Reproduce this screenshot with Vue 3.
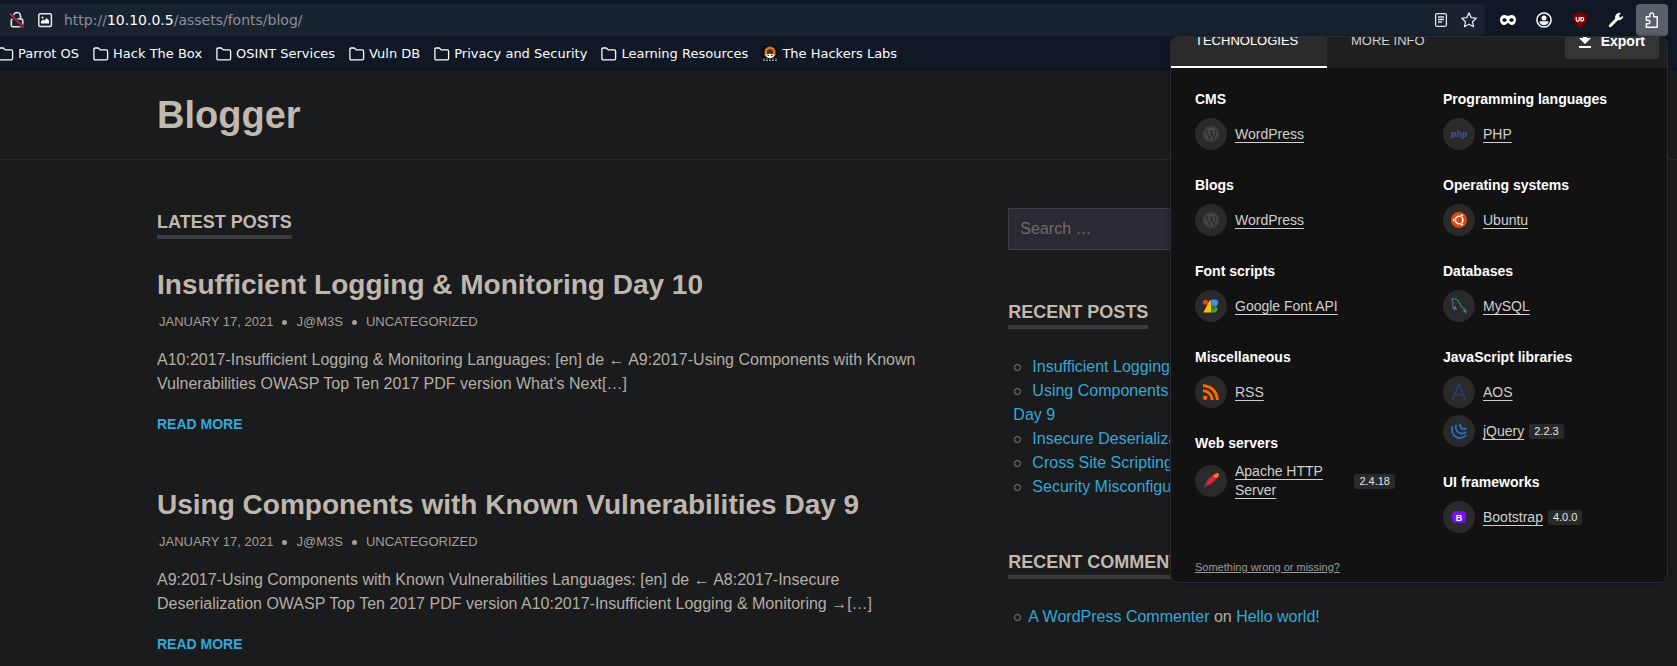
<script setup>
const bookmarks = [
  'Parrot OS', 'Hack The Box', 'OSINT Services', 'Vuln DB',
  'Privacy and Security', 'Learning Resources',
]

const posts = [
  {
    title: 'Insufficient Logging & Monitoring Day 10',
    excerpt: 'A10:2017-Insufficient Logging & Monitoring Languages: [en] de ← A9:2017-Using Components with Known Vulnerabilities OWASP Top Ten 2017 PDF version What’s Next[…]',
  },
  {
    title: 'Using Components with Known Vulnerabilities Day 9',
    excerpt: 'A9:2017-Using Components with Known Vulnerabilities Languages: [en] de ← A8:2017-Insecure Deserialization OWASP Top Ten 2017 PDF version A10:2017-Insufficient Logging & Monitoring →[…]',
  },
]

const recentPosts = [
  'Insufficient Logging & Monitoring Day 10',
  'Using Components with Known Vulnerabilities Day 9',
  'Insecure Deserialization Day 8',
  'Cross Site Scripting Day 7',
  'Security Misconfiguration Day 6',
]

const columns = [
  [
    { title: 'CMS', items: [{ name: 'WordPress', icon: 'wordpress' }] },
    { title: 'Blogs', items: [{ name: 'WordPress', icon: 'wordpress' }] },
    { title: 'Font scripts', items: [{ name: 'Google Font API', icon: 'gfonts' }] },
    { title: 'Miscellaneous', items: [{ name: 'RSS', icon: 'rss' }] },
    { title: 'Web servers', items: [{ name: 'Apache HTTP Server', icon: 'apache', version: '2.4.18' }] },
  ],
  [
    { title: 'Programming languages', items: [{ name: 'PHP', icon: 'php' }] },
    { title: 'Operating systems', items: [{ name: 'Ubuntu', icon: 'ubuntu' }] },
    { title: 'Databases', items: [{ name: 'MySQL', icon: 'mysql' }] },
    {
      title: 'JavaScript libraries',
      items: [{ name: 'AOS', icon: 'aos' }, { name: 'jQuery', icon: 'jquery', version: '2.2.3' }],
    },
    { title: 'UI frameworks', items: [{ name: 'Bootstrap', icon: 'bootstrap', version: '4.0.0' }] },
  ],
]
</script>

<template>
  <div class="browser">
    <header class="chrome">
      <div class="toolbar">
        <div class="urlbar">
          <button class="url-icon" aria-label="Connection not secure">
            <svg width="16" height="18" viewBox="0 0 16 18" fill="none">
              <path d="M4.5 8V5a3.5 3.5 0 0 1 7 0v3" stroke="#e6e8ee" stroke-width="1.6" />
              <rect x="2.3" y="8" width="11.4" height="7.7" rx="1.5" stroke="#e6e8ee" stroke-width="1.6" />
              <path d="M1 3l13 13" stroke="#192330" stroke-width="3.5" />
              <path d="M1 2.500l13.500 14" stroke="#e22850" stroke-width="1.5" />
            </svg>
          </button>
          <button class="url-icon" aria-label="Image permissions">
            <svg width="16" height="16" viewBox="0 0 16 16" fill="none">
              <rect x="1.800" y="1.800" width="12.600" height="12.600" rx="1.500" stroke="#e6e8ee" stroke-width="1.500" />
              <path d="M4 11.500V9.500l2-2 1.500 1L9.500 6 12 8.500v3z" fill="#fff" />
              <circle cx="5.500" cy="5.500" r="1" fill="#fff" />
            </svg>
          </button>
          <div class="address">http://<b>10.10.0.5</b>/assets/fonts/blog/</div>
          <button class="page-action" aria-label="Reader view">
            <svg width="16" height="16" viewBox="0 0 16 16" fill="none" stroke="#e0e3ea" stroke-width="1.300">
              <rect x="2.600" y="1.600" width="10.800" height="12.800" rx="1.500" />
              <path d="M5 5h6M5 7.500h6M5 10h4" />
            </svg>
          </button>
          <button class="page-action" aria-label="Bookmark this page">
            <svg width="16" height="16" viewBox="0 0 16 16" fill="none" stroke="#e0e3ea" stroke-width="1.300" stroke-linejoin="round">
              <path d="M8 .9l2.200 4.700 5 .6-3.700 3.500 1 5L8 12.200 3.500 14.700l1-5L.8 6.200l5-.6z" />
            </svg>
          </button>
        </div>
        <div class="tools">
          <button class="tool" aria-label="Private mask">
            <svg width="16" height="16" viewBox="0 0 16 16">
              <path fill="#fff" fill-rule="evenodd" d="M0 7.500C0 4.500 2 3 4.400 3 6.200 3 7 4 8 4s1.800-1 3.600-1C14 3 16 4.500 16 7.500c0 3.300-1.800 5.500-4.200 5.500C9.900 13 9.200 11 8 11s-1.900 2-3.800 2C1.800 13 0 10.800 0 7.500zM2.200 8c.6 1.400 1.400 1.900 2.300 1.900S6.200 9.400 6.800 8C6.200 6.700 5.400 6.200 4.500 6.200S2.800 6.700 2.200 8zm7 0c.6 1.400 1.400 1.900 2.300 1.900s1.700-.5 2.300-1.900c-.6-1.300-1.400-1.800-2.300-1.800S9.800 6.700 9.200 8z" />
            </svg>
          </button>
          <button class="tool" aria-label="Account">
            <svg width="16" height="16" viewBox="0 0 16 16">
              <circle cx="8" cy="8" r="7.100" fill="none" stroke="#fff" stroke-width="1.500" />
              <circle cx="8" cy="5.900" r="2.500" fill="#fff" />
              <path d="M3.400 9.300h9.200c0 2.200-1.800 3.900-4.600 3.900s-4.600-1.700-4.600-3.900z" fill="#fff" />
            </svg>
          </button>
          <button class="tool" aria-label="uBlock Origin">
            <svg width="16" height="16" viewBox="0 0 16 16">
              <path d="M8 .3C5.800 1.800 3.500 2.300 1 2.300c0 6 1 10 7 13.400 6-3.400 7-7.400 7-13.400-2.500 0-4.800-.5-7-2z" fill="#800000" />
              <path d="M4.200 5v2.800a1.500 1.500 0 0 0 3 0V5" fill="none" stroke="#fff" stroke-width="1.200" />
              <path d="M9 5.600h1a1.700 1.700 0 0 1 0 3.400H9z" fill="none" stroke="#fff" stroke-width="1.200" />
            </svg>
          </button>
          <button class="tool" aria-label="Developer tools">
            <svg width="16" height="16" viewBox="0 0 16 16">
              <path d="M2.300 13.700L9 7" stroke="#fff" stroke-width="3" stroke-linecap="round" />
              <path d="M12.800 1A4.500 4.500 0 0 0 7.200 6.300a4.400 4.400 0 0 0 8-2.500L12.500 5.600 10.800 4z" fill="#fff" />
            </svg>
          </button>
          <button class="tool active" aria-label="Extensions">
            <svg width="16" height="16" viewBox="0 0 16 16" fill="none" stroke="#fff" stroke-width="1.400" stroke-linejoin="round">
              <path d="M2.300 4.700h3.500V2.800a1.900 1.900 0 0 1 3.800 0v1.900h3.600v10.500H2.300v-3.400h1.900a1.700 1.700 0 0 0 0-3.600H2.300z" />
            </svg>
          </button>
        </div>
      </div>
      <nav class="bookmarks" aria-label="Bookmarks">
        <a v-for="name in bookmarks" :key="name" href="#" class="bookmark">
          <svg width="16" height="16" viewBox="0 0 16 16" fill="none" stroke="#fbfbfe" stroke-width="1.300">
            <path d="M.9 12.500V3.300Q.9 2 2.200 2h3l2.100 1.900h6Q14.600 3.900 14.600 5.200v7.300Q14.600 13.800 13.300 13.800H2.200Q.9 13.800 .9 12.500z" />
          </svg>
          <span>{{ name }}</span>
        </a>
        <a href="#" class="bookmark">
          <svg width="16" height="16" viewBox="0 0 16 16">
            <rect width="16" height="16" fill="#07101a" />
            <path d="M2.500 9.500V6a5.500 5.500 0 0 1 11 0v3.500l-2.500 1.500H5z" fill="#d9790c" />
            <path d="M5 9V6.200a3 3 0 0 1 6 0V9z" fill="#4a2a12" />
            <path d="M4 8.500q4-1.600 8 0v2L9.500 12h-3L4 10.500z" fill="#f2f2f2" />
            <path d="M5.500 9.500h1.500M9 9.500h1.500" stroke="#222" />
            <path d="M1 13h14M1 14.500h14" stroke="#8d989d" stroke-dasharray="2 1" />
          </svg>
          <span>The Hackers Labs</span>
        </a>
      </nav>
    </header>

    <div class="page">
      <header class="site-header">
        <h1>Blogger</h1>
      </header>
      <div class="content">
        <main>
          <h2 class="section-title">LATEST POSTS</h2>
          <div class="posts">
            <article v-for="post in posts" :key="post.title">
              <h3>{{ post.title }}</h3>
              <p class="meta">
                <span>JANUARY 17, 2021</span><i></i><span>J@M3S</span><i></i><span>UNCATEGORIZED</span>
              </p>
              <p class="excerpt">{{ post.excerpt }}</p>
              <a href="#" class="more">READ MORE</a>
            </article>
          </div>
        </main>
        <aside>
          <input class="search" type="search" placeholder="Search …" aria-label="Search" />
          <section class="widget">
            <h2 class="section-title">RECENT POSTS</h2>
            <ul>
              <li v-for="name in recentPosts" :key="name"><a class="entry" href="#">{{ name }}</a></li>
            </ul>
          </section>
          <section class="widget">
            <h2 class="section-title">RECENT COMMENTS</h2>
            <ul>
              <li><a href="#">A WordPress Commenter</a> on <a href="#">Hello world!</a></li>
            </ul>
          </section>
        </aside>
      </div>
    </div>

    <section class="popup" aria-label="Technologies">
      <div class="tabs">
        <button class="tab selected">TECHNOLOGIES</button>
        <button class="tab">MORE INFO</button>
        <button class="export">
          <svg width="12" height="14" viewBox="0 0 12 14" fill="#fff">
            <path d="M4 0h4v4h4L6 10 0 4h4zM0 12h12v2H0z" />
          </svg>
          <span>Export</span>
        </button>
      </div>
      <div class="tech">
        <div v-for="(groups, c) in columns" :key="c" class="tech-column">
          <section v-for="group in groups" :key="group.title" class="group">
            <h4>{{ group.title }}</h4>
            <div v-for="item in group.items" :key="item.name" class="item">
              <span class="badge">
                <svg width="16" height="16" viewBox="0 0 16 16" aria-hidden="true">
                  <g v-if="item.icon === 'wordpress'">
                    <circle cx="8" cy="8" r="7.500" fill="none" stroke="#4b4848" />
                    <circle cx="8" cy="8" r="6.600" fill="#4b4848" />
                    <path d="M2.200 5h3.300M6.900 5h3.600M3.500 5l3 8L8.300 8 7.500 5M8.300 5l2.600 8 1.900-6c.4-1.300-.6-1.700-.8-3" fill="none" stroke="#2a2929" stroke-width="1.100" />
                  </g>
                  <g v-else-if="item.icon === 'gfonts'">
                    <circle cx="2.500" cy="4.200" r="2.500" fill="#ea4335" />
                    <path d="M6.500 2.500H8.500V14.500H.3z" fill="#fbbc04" />
                    <path d="M8 1.500h1v13H8z" fill="#1a73e8" />
                    <path d="M9 1.500h3a3 3 0 0 1 0 6.500H9z" fill="#3c8bf5" />
                    <path d="M9 8h3a3.400 3.400 0 0 1 0 6.500H9z" fill="#34a853" />
                    <path d="M9 8h3a3.400 3.400 0 0 1 0 3.500H9z" fill="#188038" />
                  </g>
                  <g v-else-if="item.icon === 'rss'" fill="none" stroke="#ff6600" stroke-width="3">
                    <circle cx="2.200" cy="13.800" r="2.200" fill="#ff6600" stroke="none" />
                    <path d="M0 6.800A9.200 9.200 0 0 1 9.200 16M0 1.700A14.300 14.300 0 0 1 14.300 16" />
                  </g>
                  <g v-else-if="item.icon === 'apache'">
                    <path d="M1 15C1.500 9 8 1.500 14.500 0L16 1.200C15.500 5 8.500 12.500 3.500 12.800z" fill="#cb2138" />
                    <path d="M10 2.500L14.500 0 16 1.200 15 4 12.500 5z" fill="#f08a24" />
                    <path d="M1 15c.2-2.500 1.500-4.500 2.500-6l2 3-2 .8z" fill="#72307d" />
                    <path d="M3.500 12L14 2" stroke="#e9532a" stroke-width=".8" />
                  </g>
                  <text v-else-if="item.icon === 'php'" x="8" y="10.500" text-anchor="middle" class="php">php</text>
                  <g v-else-if="item.icon === 'ubuntu'">
                    <circle cx="8" cy="8" r="8" fill="#dd4814" />
                    <circle cx="8.200" cy="8" r="3.700" fill="none" stroke="#fff" stroke-width="1.600" />
                    <path d="M8.200 8L2.500 8M8.200 8l3-5M8.200 8l3 5" stroke="#dd4814" stroke-width=".8" />
                    <g fill="#fff" stroke="#dd4814" stroke-width=".5">
                      <circle cx="2.900" cy="8" r="1.400" /><circle cx="10.900" cy="3.400" r="1.400" /><circle cx="10.900" cy="12.600" r="1.400" />
                    </g>
                    <circle cx="8.200" cy="8" r="2.800" fill="#dd4814" />
                  </g>
                  <g v-else-if="item.icon === 'mysql'" fill="none" stroke="#4f7a90" stroke-width="1.100">
                    <path d="M.5 1C4 .3 7 2 8.500 5c1.200 2.800 2 4.500 4 5.500 1.200.6 2 1.400 2.500 2.300l-2.200-.2 2.600 2.600" />
                    <path d="M.5 1c.5 1.500 1.500 2 1.500 3.500-.5 2.500-.2 5 1 7l1.200-2.800 1.300 3.300" />
                  </g>
                  <path v-else-if="item.icon === 'aos'" d="M1.600 16L7.600 .8h.8L14.400 16M3.700 10.700h8.600" fill="none" stroke="#303a6a" stroke-width="1.800" />
                  <g v-else-if="item.icon === 'jquery'" fill="none" stroke="#2a6cc0" stroke-width="1.900">
                    <path d="M1.600 3C-.2 8.500 2.500 14.600 8.500 15c2.700.1 5-.9 6.800-2.800" />
                    <path d="M5 1.800c-1.100 4 1.200 8.300 5.300 8.700 1.900.1 3.500-.4 4.900-1.600" />
                    <path d="M9.200 .8c-.6 2.700.8 4.900 3.100 5.200 1.200.1 2.200-.2 3.200-.9" />
                  </g>
                  <g v-else>
                    <path d="M3 2.200h10q1.300 0 1.300 1.300c0 2 .2 3.500 1.500 4.500-1.300 1-1.500 2.500-1.500 4.500Q14.300 13.800 13 13.800H3q-1.300 0-1.300-1.300C1.700 10.500 1.500 9 .2 8c1.300-1 1.500-2.500 1.500-4.500Q1.700 2.200 3 2.200z" fill="#7613f7" />
                    <text x="8" y="11.500" text-anchor="middle" class="bs">B</text>
                  </g>
                </svg>
              </span>
              <a href="#" class="name">{{ item.name }}</a>
              <span v-if="item.version" class="version">{{ item.version }}</span>
            </div>
          </section>
        </div>
      </div>
      <a href="#" class="report">Something wrong or missing?</a>
    </section>
  </div>
</template>

<style>
body {
  margin: 0;
  background: #191b1c;
}
</style>

<style scoped>
.browser {
  position: relative;
  min-height: 100vh;
  font-family: "Liberation Sans", Arial, sans-serif;
  color: #b5aea5;
}
button {
  padding: 0;
  border: 0;
  background: none;
  font: inherit;
  color: inherit;
  display: flex;
  align-items: center;
  justify-content: center;
}
svg {
  display: block;
  flex: none;
}
h1, h2, h3, h4, p, ul {
  margin: 0;
  padding: 0;
}
a {
  color: #35a8da;
  text-decoration: none;
}

/* browser bars */
.chrome {
  background: #111825;
  border-bottom: 1px solid #0b0d13;
  font-family: "DejaVu Sans", sans-serif;
  color: #fbfbfe;
}
.toolbar {
  display: flex;
  align-items: center;
  gap: 7px;
  padding: 4px 9px 0 0;
}
.urlbar {
  flex: 1;
  display: flex;
  align-items: center;
  height: 32px;
  padding: 0 8px;
  background: #192330;
  border-radius: 0 4px 4px 0;
}
.url-icon {
  width: 18px;
  margin-right: 10px;
}
.address {
  flex: 1;
  font-size: 14px;
  color: #8a909a;
}
.address b {
  font-weight: normal;
  color: #fbfbfe;
}
.page-action {
  width: 28px;
  height: 28px;
}
.page-action:last-child {
  margin-right: -6px;
}
.tools {
  display: flex;
  gap: 4px;
}
.tool {
  width: 32px;
  height: 32px;
  border-radius: 4px;
}
.tool.active {
  background: #5a5f69;
}
.bookmarks {
  display: flex;
  gap: 14px;
  box-sizing: border-box;
  height: 33px;
  padding-top: 2px;
  align-items: center;
  margin-left: -2px;
  font-size: 13px;
}
.bookmark {
  display: flex;
  align-items: center;
  gap: 4px;
  color: #fbfbfe;
}

/* blog page */
.site-header {
  padding: 21px 157px 19px;
  border-bottom: 1px solid #282a2b;
}
h1 {
  font-size: 38px;
  line-height: 49px;
  color: #c1b9b0;
}
.content {
  display: grid;
  grid-template-columns: minmax(0, 15fr) minmax(0, 7fr);
  gap: 70px;
  max-width: 1216px;
  margin-left: 157px;
  padding-top: 48px;
}
.section-title {
  width: fit-content;
  padding-top: 2px;
  border-bottom: 4px solid #3a3c3e;
  font-size: 18px;
  line-height: 25px;
  color: #c1b9b0;
}
.posts {
  display: grid;
  gap: 54px;
  margin-top: 29px;
}
h3 {
  font-size: 28px;
  line-height: 34px;
  color: #bfb7ae;
}
.meta {
  display: flex;
  align-items: center;
  gap: 9px;
  margin-top: 10px;
  padding-left: 2px;
  font-size: 13px;
  line-height: 20px;
  color: #a79f94;
}
.meta i {
  width: 5px;
  height: 5px;
  border-radius: 50%;
  background: #a79f94;
}
.excerpt {
  margin: 16px 0 18px;
  font-size: 16px;
  line-height: 24px;
}
.more {
  display: block;
  font-size: 14px;
  line-height: 20px;
  font-weight: bold;
}
.search {
  display: block;
  box-sizing: border-box;
  width: 100%;
  height: 42px;
  padding: 0 11px;
  border: 1px solid #3d3f43;
  border-radius: 0;
  background: #2b2a33;
  font: 16px "Liberation Sans", Arial, sans-serif;
  color: #b5aea5;
}
.search::placeholder {
  color: #716c6a;
}
.widget {
  margin-top: 49px;
}
.search + .widget {
  margin-top: 48px;
}
ul {
  margin-top: 26px;
  padding-left: 5px;
  list-style: none;
  font-size: 16px;
  line-height: 24px;
}
li::before {
  content: "";
  display: inline-block;
  box-sizing: border-box;
  width: 7px;
  height: 7px;
  margin: 0 7px 1px 1px;
  border: 1px solid #8a8279;
  border-radius: 50%;
}
.entry {
  margin-left: 4px;
}

/* extension popup */
.popup {
  position: absolute;
  top: 36px;
  right: 9px;
  box-sizing: border-box;
  width: 498px;
  overflow: hidden;
  border: 1px solid #2b2b35;
  border-radius: 8px;
  background: #121212;
  box-shadow: 0 0 4px #00000066;
  color: #fff;
}
.tabs {
  display: flex;
  height: 55px;
  margin-top: -24px;
  background: #1f1f1f;
}
.tab {
  padding: 0 24px;
  font-size: 13px;
  color: #cfcfcf;
}
.tab.selected {
  justify-content: flex-start;
  min-width: 156px;
  background: #2b2b2b;
  box-shadow: inset 0 -2px #fff;
  color: #fff;
}
.export {
  align-self: center;
  gap: 10px;
  height: 36px;
  margin: 0 8px 0 auto;
  padding: 0 14px;
  border-radius: 4px;
  background: #353535;
  font-size: 14px;
  font-weight: bold;
}
.tech {
  display: grid;
  grid-template-columns: 1fr 1fr;
  gap: 48px;
  padding: 21px 24px 0;
}
.group {
  margin-bottom: 25px;
}
.group:last-child {
  margin-bottom: 27px;
}
h4 {
  font-size: 14px;
  line-height: 20px;
  margin-bottom: 9px;
}
.item {
  display: flex;
  align-items: center;
  min-height: 32px;
}
.item + .item {
  margin-top: 7px;
}
.badge {
  flex: none;
  display: grid;
  place-items: center;
  width: 32px;
  height: 32px;
  margin-right: 8px;
  border-radius: 50%;
  background: #2a2a2a;
}
.name {
  font-size: 14px;
  line-height: 19px;
  color: #cfcfcf;
  text-decoration: underline 1px;
  text-underline-offset: 3px;
}
.version {
  margin-left: 5px;
  padding: 0 5px;
  border-radius: 3px;
  background: #2a2a2a;
  font-size: 11px;
  line-height: 15px;
  color: #e6e6e6;
}
.php {
  font: italic bold 8px "DejaVu Sans", sans-serif;
  fill: #484f89;
}
.bs {
  font: bold 9px "Liberation Sans", sans-serif;
  fill: #fff;
}
.report {
  display: block;
  width: fit-content;
  margin: 0 24px 8px;
  font-size: 11px;
  line-height: 14px;
  color: #9a9a9a;
  text-decoration: underline;
}
</style>
